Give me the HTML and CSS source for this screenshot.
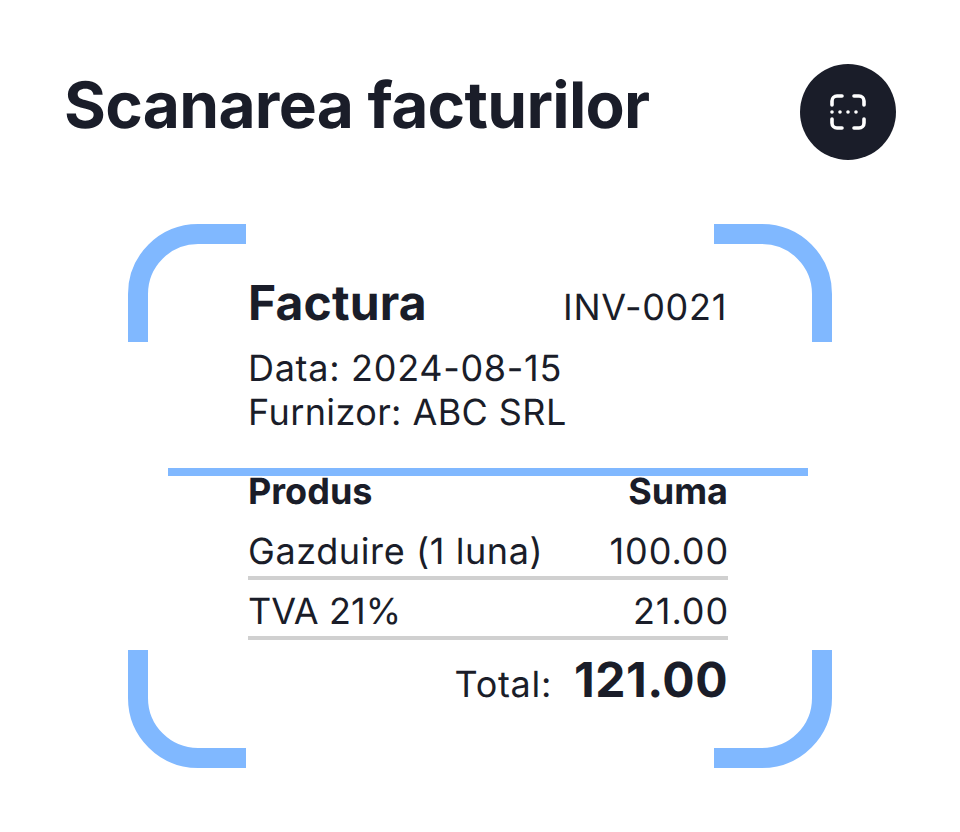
FILE: index.html
```html
<!DOCTYPE html>
<html lang="ro">
<head>
<meta charset="utf-8">
<title>Scanarea facturilor</title>
<link rel="stylesheet" href="styles.css">
</head>
<body>
<main class="page">
  <header class="header">
    <h1 class="title">Scanarea facturilor</h1>
    <button class="scan-btn" aria-label="Scan">
      <svg class="scan-icon" viewBox="0 0 36 36" fill="none" stroke="#fff" stroke-width="3.6" stroke-linecap="round" stroke-linejoin="round">
        <path d="M2 11V7a5 5 0 0 1 5-5h5"/>
        <path d="M24 2h5a5 5 0 0 1 5 5v4"/>
        <path d="M2 25v4a5 5 0 0 0 5 5h5"/>
        <path d="M24 34h5a5 5 0 0 0 5-5v-4"/>
        <path d="M2 18h32" stroke-dasharray="0 8"/>
      </svg>
    </button>
  </header>
  <section class="scanner">
    <svg class="corner tl" viewBox="0 0 118 118"><path d="M10 118V70A60 60 0 0 1 70 10H118"/></svg>
    <svg class="corner tr" viewBox="0 0 118 118"><path d="M10 118V70A60 60 0 0 1 70 10H118"/></svg>
    <svg class="corner bl" viewBox="0 0 118 118"><path d="M10 118V70A60 60 0 0 1 70 10H118"/></svg>
    <svg class="corner br" viewBox="0 0 118 118"><path d="M10 118V70A60 60 0 0 1 70 10H118"/></svg>
    <div class="scan-line"></div>
    <div class="invoice">
      <div class="row head">
        <strong class="inv-title">Factura</strong>
        <span class="inv-no">INV-0021</span>
      </div>
      <div class="meta">
        <div>Data: 2024-08-15</div>
        <div class="supplier">Furnizor: ABC SRL</div>
      </div>
      <div class="row cols"><span>Produs</span><span>Suma</span></div>
      <div class="row item"><span class="item-name">Gazduire (1 luna)</span><span class="amount">100.00</span></div>
      <div class="row item"><span class="item-tax">TVA 21%</span><span class="amount">21.00</span></div>
      <div class="total"><span class="total-label">Total:</span><strong class="total-value">121.00</strong></div>
    </div>
  </section>
</main>
</body>
</html>
```
FILE: styles.css
```css
* { box-sizing: border-box; }
html, body { margin: 0; padding: 0; background: #fff; }
body { font-family: Inter, "Liberation Sans", sans-serif; color: #1a1d29; text-rendering: geometricPrecision; }
.page { width: 960px; height: 832px; padding: 64px; }
.header { display: flex; justify-content: space-between; align-items: flex-start; height: 96px; }
.title { margin: 2px 0 0; font-size: 64px; line-height: 80px; font-weight: 700; letter-spacing: -0.7px; }
.scan-btn { width: 96px; height: 96px; border: 0; border-radius: 50%; background: #1a1d29; padding: 0; display: flex; align-items: center; justify-content: center; }
.scan-icon { width: 36px; height: 36px; display: block; }
.scanner { position: relative; width: 704px; height: 544px; margin: 64px 0 0 64px; padding: 0 104px 0 120px; }
.corner { position: absolute; width: 118px; height: 118px; fill: none; stroke: #80b8ff; stroke-width: 20; }
.tl { left: 0; top: 0; }
.tr { right: 0; top: 0; transform: scaleX(-1); }
.bl { left: 0; bottom: 0; transform: scaleY(-1); }
.br { right: 0; bottom: 0; transform: scale(-1, -1); }
.scan-line { position: absolute; left: 40px; right: 24px; top: 244px; height: 8px; background: #80b8ff; }
.invoice { width: 480px; padding-top: 49px; font-size: 36px; letter-spacing: 0.7px; }
.row { display: flex; justify-content: space-between; align-items: baseline; }
.inv-title { font-size: 48px; line-height: 60px; font-weight: 700; letter-spacing: 0.15px; }
.inv-no { margin-right: 1px; }
.meta { margin-top: 13px; line-height: 44px; }
.supplier { letter-spacing: 0.4px; }
.cols { margin: 35px 0 7px; font-weight: 700; line-height: 44px; letter-spacing: 0; }
.item { height: 60px; align-items: center; padding-top: 5px; border-bottom: 4px solid #d0d0d0; line-height: 40px; }
.item-name { letter-spacing: 0.6px; }
.item-tax { letter-spacing: 0.1px; }
.amount { letter-spacing: 0.9px; margin-right: -1px; }
.total { display: flex; justify-content: flex-end; align-items: baseline; gap: 22px; margin-top: 8px; }
.total-label { margin-left: 1px; }
.total-value { font-size: 48px; line-height: 64px; font-weight: 700; letter-spacing: 0.5px; }
```
